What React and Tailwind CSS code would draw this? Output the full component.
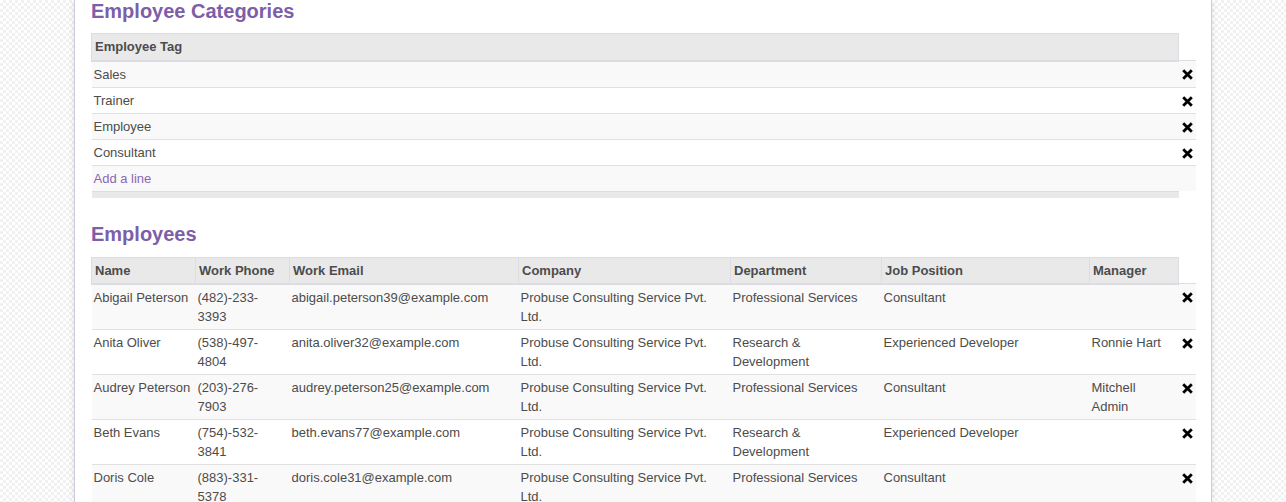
import React from 'react';

const tags = ['Sales', 'Trainer', 'Employee', 'Consultant'];

const employees = [
  {
    name: 'Abigail Peterson',
    phone: '(482)-233-3393',
    email: 'abigail.peterson39@example.com',
    dept: 'Professional Services',
    job: 'Consultant',
    manager: '',
  },
  {
    name: 'Anita Oliver',
    phone: '(538)-497-4804',
    email: 'anita.oliver32@example.com',
    dept: 'Research & Development',
    job: 'Experienced Developer',
    manager: 'Ronnie Hart',
  },
  {
    name: 'Audrey Peterson',
    phone: '(203)-276-7903',
    email: 'audrey.peterson25@example.com',
    dept: 'Professional Services',
    job: 'Consultant',
    manager: 'Mitchell Admin',
  },
  {
    name: 'Beth Evans',
    phone: '(754)-532-3841',
    email: 'beth.evans77@example.com',
    dept: 'Research & Development',
    job: 'Experienced Developer',
    manager: '',
  },
  {
    name: 'Doris Cole',
    phone: '(883)-331-5378',
    email: 'doris.cole31@example.com',
    dept: 'Professional Services',
    job: 'Consultant',
    manager: '',
  },
];

const headers = [
  ['Name', 'w-[104px]'],
  ['Work Phone', 'w-[94px]'],
  ['Work Email', 'w-[229px]'],
  ['Company', 'w-[212px]'],
  ['Department', 'w-[151px]'],
  ['Job Position', 'w-[208px]'],
  ['Manager', 'w-[89px]'],
];

// fa-times style delete cross
const DeleteIcon = () => (
  <svg width="11" height="11" viewBox="0 0 11 11" className="block mx-auto mt-[5px]">
    <path d="M2.2 2.2 L8.8 8.8 M8.8 2.2 L2.2 8.8" stroke="#000" strokeWidth="2.8" strokeLinecap="square" />
  </svg>
);

const rowBg = (i) => (i % 2 === 0 ? 'bg-[#f9f9f9]' : 'bg-white');

const App = () => {
  return (
    <div className="h-[502px] overflow-hidden bg-white bg-[image:repeating-conic-gradient(#f1f1f1_0_25%,#ffffff_0_50%)] bg-size-[6px_6px] font-['Liberation_Sans',Arial,sans-serif] text-[13px] leading-[19px] text-[#4c4c4c]">
      <div className="mx-auto w-[1138px] h-full bg-white border-x border-[#cdcbdb] shadow-[0_0_6px_rgba(0,0,0,0.12)] px-[16px]">
        {/* Employee Categories */}
        <h2 className="text-[20px] leading-[22px] font-bold text-[#7d5ea8]">Employee Categories</h2>
        <table className="mt-[11px] w-[1104px] table-fixed border-collapse">
          <colgroup>
            <col className="w-[1087px]" />
            <col className="w-[17px]" />
          </colgroup>
          <thead>
            <tr>
              <th className="h-[27px] bg-[#e9e9e9] border border-b-2 border-[#dcdce2] px-[3px] text-left font-bold">
                Employee Tag
              </th>
              <th className="border-b border-[#dcdce2]"></th>
            </tr>
          </thead>
          <tbody>
            {tags.map((t, i) => (
              <tr key={t} className={`${rowBg(i)} ${i > 0 ? 'border-t border-[#e1e1e1]' : ''}`}>
                <td className="py-[3px] pl-[2px] align-top">{t}</td>
                <td className="py-[3px] align-top">
                  <DeleteIcon />
                </td>
              </tr>
            ))}
            <tr className="bg-[#f9f9f9] border-t border-[#e1e1e1]">
              <td className="py-[3px] pl-[2px] text-[#8a67b3]" colSpan={2}>
                Add a line
              </td>
            </tr>
          </tbody>
          <tfoot>
            <tr>
              <td className="h-[7px] bg-[#e9e9e9] border-t border-[#dcdce2]"></td>
              <td></td>
            </tr>
          </tfoot>
        </table>

        {/* Employees */}
        <h2 className="mt-[25px] text-[20px] leading-[22px] font-bold text-[#7d5ea8]">Employees</h2>
        <table className="mt-[12px] w-[1104px] table-fixed border-collapse">
          <colgroup>
            {headers.map(([h, w]) => (
              <col key={h} className={w} />
            ))}
            <col className="w-[17px]" />
          </colgroup>
          <thead>
            <tr>
              {headers.map(([h]) => (
                <th
                  key={h}
                  className="h-[26px] bg-[#e9e9e9] border border-b-2 border-[#dcdce2] px-[3px] text-left font-bold"
                >
                  {h}
                </th>
              ))}
              <th className="border-b border-[#dcdce2]"></th>
            </tr>
          </thead>
          <tbody>
            {employees.map((e, i) => (
              <tr key={e.name} className={`${rowBg(i)} ${i > 0 ? 'border-t border-[#e1e1e1]' : ''}`}>
                <td className="py-[3px] pl-[2px] pr-[4px] align-top">{e.name}</td>
                <td className="py-[3px] pl-[2px] pr-[4px] align-top">{e.phone}</td>
                <td className="py-[3px] pl-[2px] pr-[4px] align-top">{e.email}</td>
                <td className="py-[3px] pl-[2px] pr-[4px] align-top">Probuse Consulting Service Pvt. Ltd.</td>
                <td className="py-[3px] pl-[2px] pr-[4px] align-top">{e.dept}</td>
                <td className="py-[3px] pl-[2px] pr-[4px] align-top">{e.job}</td>
                <td className="py-[3px] pl-[2px] pr-[6px] align-top">{e.manager}</td>
                <td className="py-[3px] align-top">
                  <DeleteIcon />
                </td>
              </tr>
            ))}
          </tbody>
        </table>
      </div>
    </div>
  );
};

export default App;
